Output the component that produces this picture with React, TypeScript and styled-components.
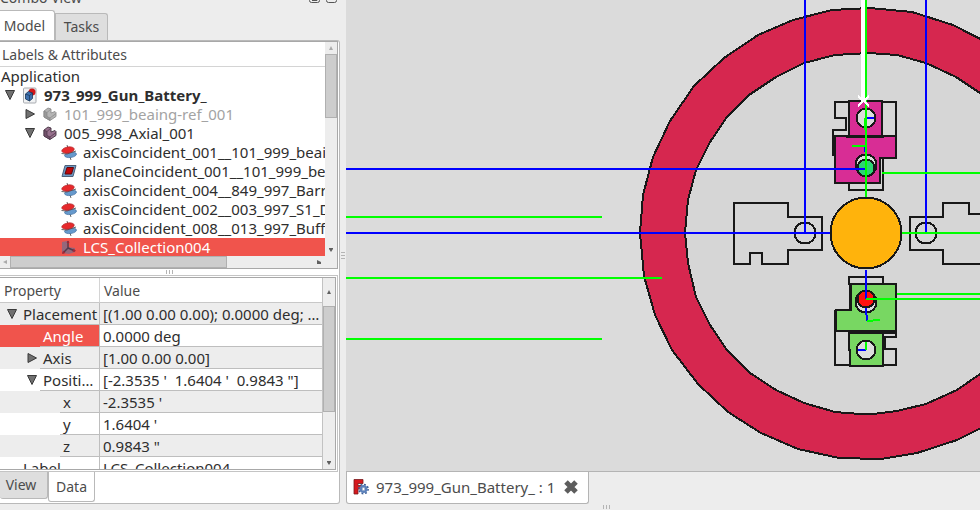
import React from "react";
import styled, { createGlobalStyle, css } from "styled-components";

const GlobalStyle = createGlobalStyle`
  *, *::before, *::after { box-sizing: border-box; }
  body {
    margin: 0;
    background: #ededed;
    color: #2e2e2e;
    font: 14px/20px "Noto Sans", "Open Sans", sans-serif;
    overflow: hidden;
  }
  button { font: inherit; color: inherit; padding: 0; border: 0; background: none; }
  svg { flex-shrink: 0; }
`;

const Page = styled.div`
  display: flex;
  height: 100vh;
`;

/* ---------- side dock ---------- */

const Dock = styled.aside`
  display: flex;
  flex-direction: column;
  flex: 0 0 340px;
  min-width: 0;
  padding-bottom: 6px;
`;

const DockTitle = styled.header`
  display: flex;
  align-items: flex-end;
  justify-content: space-between;
  flex: 0 0 10px;
  height: 10px;
  padding: 0 3px 7px 0;
  overflow: hidden;
  color: #4c4c4c;
`;

const TitleText = styled.span`
  line-height: 10px;
`;

const TitleButtons = styled.span`
  display: flex;
  gap: 6px;
`;

const TitleButton = styled.button`
  display: flex;
`;

const TabBar = styled.div<{ $below?: boolean }>`
  display: flex;
  align-items: ${(p) => (p.$below ? "flex-start" : "flex-end")};
  flex: 0 0 ${(p) => (p.$below ? 31 : 30)}px;
`;

const Tab = styled.button<{ $active?: boolean; $below?: boolean; $first?: boolean; $width: number }>`
  width: ${(p) => p.$width}px;
  height: ${(p) => (p.$active ? 30 : 27)}px;
  padding-right: ${(p) => (p.$first ? 5 : 0)}px;
  border: 1px solid #b9b9b9;
  border-left-width: ${(p) => (p.$first ? 0 : 1)}px;
  background: ${(p) => (p.$active ? "#fff" : "#dedede")};
  color: #4c4c4c;
  ${(p) =>
    p.$below
      ? css`border-top: 0; border-radius: 0 0 3px 3px;`
      : css`border-bottom: 0; border-radius: 0 3px 0 0;`}
`;

const Pane = styled.div`
  display: flex;
  flex-direction: column;
  flex: 1 1 0;
  min-height: 0;
  background: #fff;
  border: 1px solid #b9b9b9;
  border-left: 0;
  border-radius: 0 3px 3px 0;
`;

const TreeBox = styled.section`
  display: grid;
  grid-template-columns: minmax(0, 1fr) 12px;
  grid-template-rows: minmax(0, 1fr) 12px;
  flex: 1 1 228px;
  min-height: 0;
  margin-right: 1px;
  border: 1px solid #a8a8a8;
  border-left: 0;
`;

const TreeBody = styled.div`
  overflow: hidden;
`;

const TreeHeader = styled.div`
  height: 25px;
  padding: 3px 2px 0;
  border-bottom: 1px solid #d4d4d4;
  color: #4c4c4c;
`;

const Tree = styled.ul`
  list-style: none;
  margin: 0;
  padding: 0;
  font-size: 15px;
`;

const TreeRow = styled.li<{ $depth: number; $tone?: "bold" | "dim" | "selected" }>`
  display: flex;
  align-items: center;
  height: 19px;
  padding-bottom: 1px;
  padding-left: ${(p) => (p.$depth < 0 ? 1 : 4 + p.$depth * 20)}px;
  white-space: nowrap;
  ${(p) => p.$tone === "bold" && css`font-weight: 700;`}
  ${(p) => p.$tone === "dim" && css`color: #a3a3a3;`}
  ${(p) => p.$tone === "selected" && css`background: #f0544c; color: #fff;`}
`;

const Caret = styled.span`
  display: flex;
  align-items: center;
  flex: 0 0 11px;
  height: 18px;
`;

const IconCell = styled.span`
  display: flex;
  justify-content: center;
  flex: 0 0 28px;
`;

const Scroll = styled.div<{ $across?: boolean }>`
  display: flex;
  flex-direction: ${(p) => (p.$across ? "row" : "column")};
  flex: 0 0 12px;
  background: #ededed;
  min-width: 0;
  min-height: 0;
`;

const ScrollEnd = styled.span<{ $size: number }>`
  display: flex;
  align-items: center;
  justify-content: center;
  flex: 0 0 ${(p) => p.$size}px;
`;

const Thumb = styled.span<{ $grow: number }>`
  flex: ${(p) => p.$grow} 1 0;
  background: #cdcdcd;
  border: 1px solid #b0b0b0;
`;

const Track = styled.span<{ $grow: number }>`
  flex: ${(p) => p.$grow} 1 0;
`;

const Grip = styled.div<{ $upright?: boolean }>`
  display: flex;
  flex-direction: ${(p) => (p.$upright ? "column" : "row")};
  align-items: center;
  justify-content: center;
  gap: 2px;
  flex: 0 0 6px;
  &::before, &::after { content: ""; }
  & > i, &::before, &::after {
    width: ${(p) => (p.$upright ? 4 : 1)}px;
    height: ${(p) => (p.$upright ? 1 : 4)}px;
    background: #b4b4b4;
  }
`;

const PropertyFrame = styled.section`
  display: flex;
  flex: 1 1 197px;
  min-height: 0;
  margin-right: 1px;
  padding: 1px 1px 1px 0;
  border: 1px solid #c4c4c4;
  border-left: 0;
`;

const PropertyBox = styled.div`
  display: flex;
  flex: 1;
  min-width: 0;
  border: 1px solid #a8a8a8;
  border-left: 0;
`;

const PropertyView = styled.div`
  flex: 1;
  min-width: 0;
  overflow: hidden;
  border-right: 1px solid #c2c2c2;
`;

const PropertyTable = styled.table`
  width: 100%;
  border-collapse: separate;
  border-spacing: 0;
  table-layout: fixed;
  font-size: 15px;
`;

const HeadCell = styled.th<{ $first?: boolean }>`
  width: ${(p) => (p.$first ? "99px" : "auto")};
  height: 25px;
  padding: 2px 4px 0;
  border-bottom: 1px solid #c8c8c8;
  border-left: ${(p) => (p.$first ? "0" : "1px solid #d4d4d4")};
  text-align: left;
  font-size: 14px;
  font-weight: 400;
  color: #4c4c4c;
`;

const PropertyRow = styled.tr<{ $shaded: boolean }>`
  background: ${(p) => (p.$shaded ? "#ededed" : "#fff")};
`;

const NameCell = styled.th<{ $selected?: boolean }>`
  height: 22px;
  padding: 0;
  text-align: left;
  font-weight: 400;
  ${(p) => p.$selected && css`background: #f0544c; color: #fff;`}
`;

const NameLine = styled.div<{ $depth: number }>`
  display: flex;
  align-items: center;
  height: 22px;
  padding-left: ${(p) => p.$depth * 20}px;
`;

const NameCaret = styled.span`
  display: flex;
  flex: 0 0 20px;
  padding-left: 6px;
`;

const NameText = styled.span`
  flex: 1;
  min-width: 0;
  height: 22px;
  padding: 1px 0 0 3px;
  overflow: hidden;
  white-space: nowrap;
  border-bottom: 1px solid #bebebe;
`;

const ValueCell = styled.td`
  height: 22px;
  padding: 1px 0 0 3px;
  overflow: hidden;
  white-space: pre;
  border-left: 1px solid #bebebe;
  border-bottom: 1px solid #bebebe;
`;

/* ---------- document area ---------- */

const Workspace = styled.main`
  display: flex;
  flex-direction: column;
  flex: 1;
  min-width: 0;
`;

const Viewport = styled.div`
  flex: 1;
  min-height: 0;
  background: #dbdbdb;
`;

const Drawing = styled.svg`
  display: block;
  width: 100%;
  height: 100%;
`;

const DocumentBar = styled.div`
  flex: 0 0 33px;
  border-top: 1px solid #b4b4b4;
`;

const DocumentTab = styled.div`
  display: flex;
  align-items: center;
  width: 243px;
  height: 32px;
  padding: 0 9px 1px 6px;
  background: #fff;
  border: 1px solid #b4b4b4;
  border-top: 0;
  border-radius: 0 0 3px 3px;
  color: #4c4c4c;
  font-size: 15px;
`;

const DocumentName = styled.span`
  flex: 1;
  padding-left: 7px;
  white-space: nowrap;
`;

const CloseButton = styled.button`
  display: flex;
`;

const BottomGrip = styled.div`
  display: flex;
  flex: 0 0 6px;
  padding-left: 257px;
`;

/* ---------- icons ---------- */

const Triangle = ({ open }: { open: boolean }) => (
  <svg width="12" height="12" viewBox="0 0 12 12">
    <path
      d={open ? "M1.500 1.500h9L6 10.500z" : "M2 1.500v9L10.500 6z"}
      fill="#707070"
      stroke="#393939"
      strokeWidth="1"
    />
  </svg>
);

const Arrow = ({ d, dim }: { d: string; dim?: boolean }) => (
  <svg width="6" height="6" viewBox="0 0 6 6">
    <path d={d} fill={dim ? "#aaa" : "#606060"} />
  </svg>
);
const UP = "M3 1L5 5H1z";
const DOWN = "M1 1h4v1L3 5 1 2z";
const LEFT = "M1 3l4-2v4z";
const RIGHT = "M1 1l4 2v2H1z";

const DocIcon = () => (
  <svg width="14" height="17" viewBox="0 0 14 17">
    <rect x="0.500" y="1" width="12.500" height="15" rx="1" fill="#f0f2f3" stroke="#a8abb0" />
    <circle cx="9" cy="5" r="3.500" fill="#d21518" />
    <path d="M2.500 7l3-2.500 4 1.500v5.500l-3 2.500-4-2z" fill="#3e70ad" stroke="#173456" strokeWidth="0.800" />
    <path d="M2.500 7L6.500 8.500 9.500 6M6.500 8.500V14" fill="none" stroke="#173456" strokeWidth="0.700" />
  </svg>
);

const PartIcon = ({ dim }: { dim?: boolean }) => (
  <svg width="14" height="14" viewBox="0 0 14 14">
    <path
      d="M1 4l4-3 3 1v4l4-1.500 1 1v4L7 13.500 1 10z"
      fill={dim ? "#b5b5b5" : "#98718e"}
      stroke={dim ? "#909090" : "#443241"}
      strokeWidth="0.900"
    />
    <path
      d="M1 4l3 1.500v4L7 11v2.500L1 10zM4 5.500l4-3.500M7 11l6-4.500"
      fill={dim ? "#999" : "#72516b"}
      stroke={dim ? "#878787" : "#493445"}
      strokeWidth="0.700"
    />
  </svg>
);

const AxisIcon = () => (
  <svg width="16" height="15" viewBox="0 0 16 15">
    <path d="M6 0l1 3M9 12l1 3" stroke="#666" />
    <ellipse cx="9.500" cy="9.800" rx="6" ry="2.700" transform="rotate(-8 9.500 9.800)" fill="#6699cc" stroke="#4272a4" strokeWidth="0.700" />
    <path d="M0.500 8.500L6 9l9-3" fill="none" stroke="#555" strokeWidth="0.900" />
    <ellipse cx="7" cy="5" rx="6.300" ry="3" transform="rotate(-10 7 5)" fill="#e6292b" stroke="#b5282c" strokeWidth="0.700" />
  </svg>
);

const PlaneIcon = () => (
  <svg width="16" height="15" viewBox="0 0 16 15">
    <path d="M4 1.500h11L12 12.500H1z" fill="#6b99c6" stroke="#4c6078" />
    <path d="M6 3.500h6.500L10.500 10H4z" fill="#bd0508" stroke="#61090b" />
  </svg>
);

const LcsIcon = () => (
  <svg width="16" height="15" viewBox="0 0 16 15">
    <path d="M1 2l5-1v6l8 1v4L8 14 1 13z" fill="#96677b" />
    <path d="M7 1v7M7 8l7 3M7 8l-5 5" fill="none" stroke="#513b4c" strokeWidth="1.500" />
    <path d="M5.500 3L7 0.500 8.500 3zM11.500 12l3.500-1-2.500-2.500zM1 14l1-3.500L4.500 13z" fill="#a42535" />
  </svg>
);

const FreeCadIcon = () => (
  <svg width="16" height="18" viewBox="0 0 16 18">
    <path d="M1 1.500h9v4H5v2h3.500v3.500H5V16H1z" fill="#d6181d" stroke="#78191c" strokeWidth="0.800" />
    <circle cx="10.500" cy="11" r="4.600" fill="none" stroke="#3d5f97" strokeWidth="1.600" strokeDasharray="1.800 1.813" />
    <circle cx="10.500" cy="11" r="2.800" fill="#f5f7fb" stroke="#5b81bb" strokeWidth="2.200" />
    <circle cx="10.500" cy="11" r="1.500" fill="#fff" stroke="#3d5f97" strokeWidth="0.500" />
  </svg>
);

/* ---------- data ---------- */

type Item = {
  label: string;
  depth: number;
  open?: boolean;
  tone?: "bold" | "dim" | "selected";
  icon?: React.ReactNode;
};

const items: Item[] = [
  { label: "Application", depth: -1 },
  { label: "973_999_Gun_Battery_", depth: 0, open: true, tone: "bold", icon: <DocIcon /> },
  { label: "101_999_beaing-ref_001", depth: 1, open: false, tone: "dim", icon: <PartIcon dim /> },
  { label: "005_998_Axial_001", depth: 1, open: true, icon: <PartIcon /> },
  { label: "axisCoincident_001__101_999_beai", depth: 2, icon: <AxisIcon /> },
  { label: "planeCoincident_001__101_999_bea", depth: 2, icon: <PlaneIcon /> },
  { label: "axisCoincident_004__849_997_Barr", depth: 2, icon: <AxisIcon /> },
  { label: "axisCoincident_002__003_997_S1_D", depth: 2, icon: <AxisIcon /> },
  { label: "axisCoincident_008__013_997_Buff", depth: 2, icon: <AxisIcon /> },
  { label: "LCS_Collection004", depth: 2, tone: "selected", icon: <LcsIcon /> },
];

type Property = { name: string; value: string; depth: number; open?: boolean; selected?: boolean };

const properties: Property[] = [
  { name: "Placement", value: "[(1.00 0.00 0.00); 0.0000 deg; …", depth: 0, open: true },
  { name: "Angle", value: "0.0000 deg", depth: 1, selected: true },
  { name: "Axis", value: "[1.00 0.00 0.00]", depth: 1, open: false },
  { name: "Positi…", value: "[-2.3535 '  1.6404 '  0.9843 \"]", depth: 1, open: true },
  { name: "x", value: "-2.3535 '", depth: 2 },
  { name: "y", value: "1.6404 '", depth: 2 },
  { name: "z", value: "0.9843 \"", depth: 2 },
  { name: "Label", value: "LCS_Collection004", depth: 0 },
];

/* ---------- model drawing ---------- */

const OUTER =
  "870,8 912,12 953,25 990,44 1024,70 1052,102 1074,140 1087,180 1092,225 1089,270 1078,315 1058,355 1030,390 997,420 957,440 917,453 881,459 839,458 798,449 761,433 728,412 698,384 672,350 655,315 644,276 640,233 643,195 653,157 670,121 694,86 724,58 758,35 793,20 832,10";
const INNER =
  "869,53 897,55 926,63 956,77 983,95 1006,118 1024,145 1037,175 1045,205 1047,233 1045,265 1037,295 1024,323 1006,350 983,372 957,390 926,404 897,411 873,414 860,414 835,412 804,403 776,390 750,373 727,350 710,325 696,297 688,263 685,233 688,200 696,170 710,142 727,117 749,95 776,77 804,63 835,55";

const Model = () => (
  <Drawing viewBox="346 0 634 471" preserveAspectRatio="xMinYMin slice" role="img" aria-label="Model view">
    <g shapeRendering="crispEdges" fill="none" stroke="#181818" strokeWidth="2">
      <polygon points={OUTER} fill="#d6274f" />
      <polygon points={INNER} fill="#d6d6d6" />
      <path d="M734 203H788V217H822V250H788V264H762V253H750V264H734Z" />
      <path d="M990 214H969V203H943V217H910V250H943V264H990" />
      <circle cx="805" cy="233" r="10.500" />
      <circle cx="926" cy="233" r="10.500" />

      <path d="M849 102H835V118H846V130H833V156M882 102H896V137M849 182V190H883V158" />
      <path d="M849 101H882V136H849Z" fill="#d82d95" />
      <path d="M835 136H896V158H880V183H835Z" fill="#d82d95" />
      <path d="M846 136H884" strokeWidth="3" />
      <path d="M834 136V156" strokeWidth="3" />
      <circle cx="866" cy="118" r="9.500" fill="#dcdcdc" />
      <circle cx="866" cy="165" r="10.500" fill="#dcdcdc" />
      <circle cx="866" cy="168" r="8.500" fill="#2dd473" />

      <path d="M849 285V277H883V284M835 331V365H849M883 331H896V337H885V349H896V365H883" />
      <path d="M851 284H896V331H836V310H851Z" fill="#78d762" />
      <path d="M849 332H883V366H850V350H849Z" fill="#78d762" />
      <path d="M850 284V310" strokeWidth="3" />
      <path d="M835 310V331M848 332H897" strokeWidth="3" />
      <circle cx="866" cy="302" r="10.500" fill="#dcdcdc" />
      <circle cx="866" cy="299" r="8.500" fill="#ff1010" />
      <circle cx="866" cy="350" r="9.500" fill="#dcdcdc" />
      <circle cx="866" cy="233" r="35.500" fill="#ffb30c" />
    </g>
    <g shapeRendering="crispEdges" fill="none" strokeWidth="2">
      <path d="M346 169H865M346 233H830M805 0V232M926 0V232M866 270V299M866 308L867 321M867 118H874M865 146V152M858 350H866" stroke="#00f" />
      <path d="M346 217H602M346 278H662M346 339H602M882 173H990M902 233H990M897 294H990M866 299H990M852 146H866M866 342V350M867 321L880 320" stroke="#0f0" />
      <path d="M863 0V101" stroke="#fff" strokeWidth="4" />
      <path d="M866 0V197" stroke="#0f0" />
      <path d="M865 118V130" stroke="#0f0" />
      <path d="M858 96L869 106M869 96L858 106" stroke="#fff" />
    </g>
  </Drawing>
);

export default function App() {
  return (
    <>
      <GlobalStyle />
      <Page>
        <Dock>
          <DockTitle>
            <TitleText>Combo View</TitleText>
            <TitleButtons>
              <TitleButton aria-label="Float panel">
                <svg width="11" height="11" viewBox="0 0 11 11" fill="none" stroke="#555">
                  <rect x="0.500" y="0.500" width="10" height="10" rx="2" />
                  <path d="M3 8.500h5V5" />
                </svg>
              </TitleButton>
              <TitleButton aria-label="Close panel">
                <svg width="11" height="11" viewBox="0 0 11 11" fill="none" stroke="#555">
                  <rect x="0.500" y="0.500" width="10" height="10" rx="2" />
                  <path d="M3 3l5 5M8 3L3 8" />
                </svg>
              </TitleButton>
            </TitleButtons>
          </DockTitle>
          <TabBar>
            <Tab $first $active $width={55}>Model</Tab>
            <Tab $width={53}>Tasks</Tab>
          </TabBar>
          <Pane>
            <TreeBox>
              <TreeBody>
                <TreeHeader>Labels &amp; Attributes</TreeHeader>
                <Tree>
                  {items.map((item) => (
                    <TreeRow key={item.label} $depth={item.depth} $tone={item.tone}>
                      {item.depth >= 0 && (
                        <Caret>{item.open !== undefined && <Triangle open={item.open} />}</Caret>
                      )}
                      {item.icon && <IconCell>{item.icon}</IconCell>}
                      {item.label}
                    </TreeRow>
                  ))}
                </Tree>
              </TreeBody>
              <Scroll>
                <ScrollEnd $size={12}><Arrow d={UP} dim /></ScrollEnd>
                <Thumb $grow={63} />
                <Track $grow={127} />
                <ScrollEnd $size={12}><Arrow d={DOWN} /></ScrollEnd>
              </Scroll>
              <Scroll $across>
                <ScrollEnd $size={10}><Arrow d={LEFT} dim /></ScrollEnd>
                <Thumb $grow={216} />
                <Track $grow={87} />
                <ScrollEnd $size={12}><Arrow d={RIGHT} /></ScrollEnd>
              </Scroll>
              <Scroll />
            </TreeBox>
            <Grip><i /></Grip>
            <PropertyFrame>
              <PropertyBox>
                <PropertyView>
                  <PropertyTable>
                    <thead>
                      <tr>
                        <HeadCell $first scope="col">Property</HeadCell>
                        <HeadCell scope="col">Value</HeadCell>
                      </tr>
                    </thead>
                    <tbody>
                      {properties.map((p, i) => (
                        <PropertyRow key={p.name} $shaded={i % 2 === 0}>
                          <NameCell scope="row" $selected={p.selected}>
                            <NameLine $depth={p.depth}>
                              <NameCaret>{p.open !== undefined && <Triangle open={p.open} />}</NameCaret>
                              <NameText>{p.name}</NameText>
                            </NameLine>
                          </NameCell>
                          <ValueCell>{p.value}</ValueCell>
                        </PropertyRow>
                      ))}
                    </tbody>
                  </PropertyTable>
                </PropertyView>
                <Scroll>
                  <ScrollEnd $size={28}><Arrow d={UP} /></ScrollEnd>
                  <Thumb $grow={106} />
                  <Track $grow={46} />
                  <ScrollEnd $size={12}><Arrow d={DOWN} /></ScrollEnd>
                </Scroll>
              </PropertyBox>
            </PropertyFrame>
            <TabBar $below>
              <Tab $first $below $width={48}>View</Tab>
              <Tab $below $active $width={47}>Data</Tab>
            </TabBar>
          </Pane>
        </Dock>
        <Grip $upright><i /></Grip>
        <Workspace>
          <Viewport>
            <Model />
          </Viewport>
          <DocumentBar>
            <DocumentTab>
              <FreeCadIcon />
              <DocumentName>973_999_Gun_Battery_ : 1</DocumentName>
              <CloseButton aria-label="Close document">
                <svg width="16" height="16" viewBox="0 0 16 16">
                  <path d="M3 3l10 10M13 3L3 13" stroke="#5d5d5d" strokeWidth="5" />
                </svg>
              </CloseButton>
            </DocumentTab>
          </DocumentBar>
          <BottomGrip><Grip><i /></Grip></BottomGrip>
        </Workspace>
      </Page>
    </>
  );
}
